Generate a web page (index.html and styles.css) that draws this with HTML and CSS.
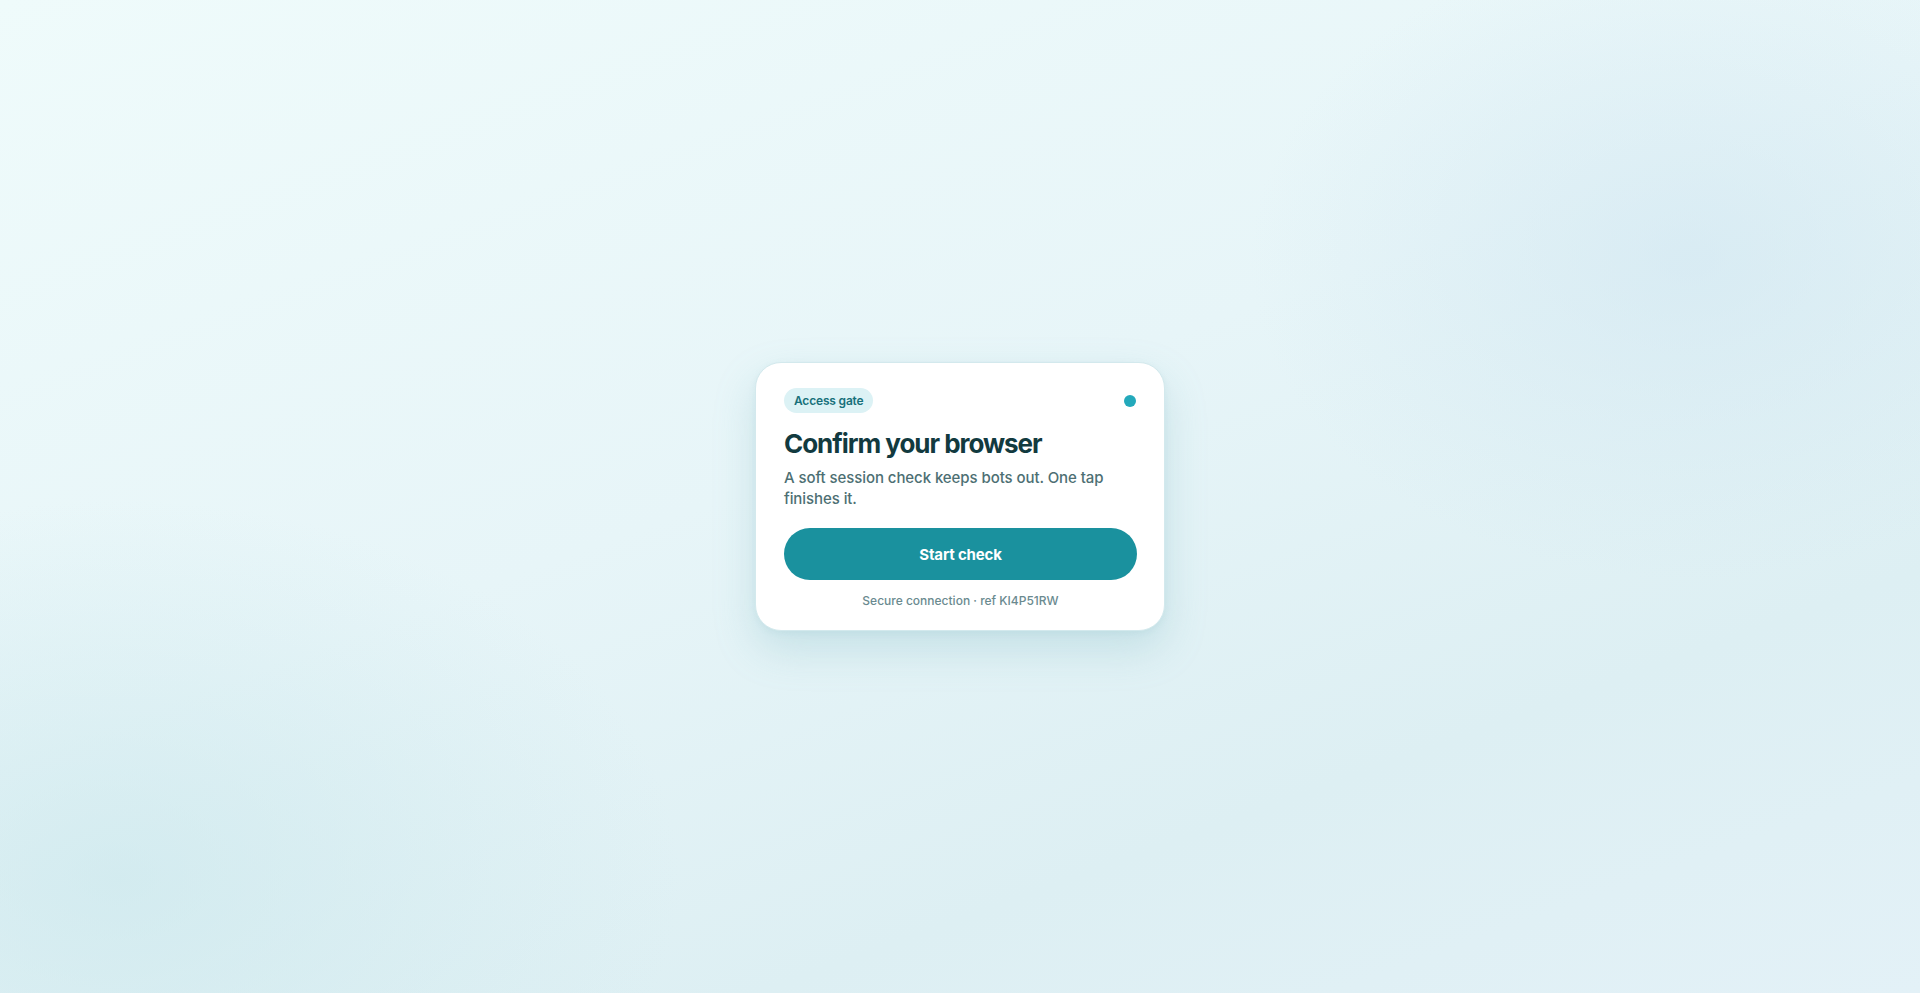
FILE: index.html
```html
<!DOCTYPE html>
<html lang="en">
<head>
<meta charset="utf-8">
<title>Confirm your browser</title>
<link rel="stylesheet" href="styles.css">
</head>
<body>
<main class="stage">
  <section class="card">
    <div class="card-head">
      <span class="badge">Access gate</span>
      <span class="dot"></span>
    </div>
    <h1 class="title">Confirm your browser</h1>
    <p class="lead">A soft session check keeps bots out. One tap finishes it.</p>
    <button class="cta" type="button">Start check</button>
    <p class="foot">Secure connection · ref KI4P51RW</p>
  </section>
</main>
</body>
</html>
```
FILE: styles.css
```css
* { box-sizing: border-box; }
html, body { margin: 0; height: 100%; }
body {
  font-family: Inter, "Noto Sans", "DejaVu Sans", sans-serif;
  background:
    radial-gradient(ellipse 440px 320px at 1690px 260px, rgba(208,230,241,0.6), rgba(208,230,241,0) 100%),
    radial-gradient(ellipse 560px 380px at 120px 880px, rgba(200,230,235,0.6), rgba(200,230,235,0) 100%),
    linear-gradient(160deg, #effbfb 0%, #e7f5f8 45%, #ddeff3 75%, #e3f1f7 100%);
  overflow: hidden;
}
.stage {
  height: 100%;
  display: flex;
  align-items: center;
  justify-content: center;
}
.card {
  width: 410px;
  background: #ffffff;
  border: 1px solid #d3e9ed;
  border-radius: 26px;
  padding: 25px 27px 21px 28px;
  box-shadow: 0 18px 40px rgba(120, 178, 190, 0.28), 0 2px 6px rgba(120, 178, 190, 0.12);
}
.card-head {
  display: flex;
  align-items: center;
  justify-content: space-between;
}
.badge {
  display: inline-flex;
  align-items: center;
  height: 25px;
  padding: 0 10px;
  border-radius: 13px;
  background: #dcf2f5;
  color: #17707a;
  font-size: 12px;
  font-weight: 600;
  letter-spacing: -0.015em;
}
.dot {
  width: 12px;
  height: 12px;
  border-radius: 50%;
  background: #23a9bb;
  margin-right: 1px;
}
.title {
  margin: 15px 0 0;
  font-size: 26px;
  line-height: 31px;
  font-weight: 700;
  letter-spacing: -0.04em;
  color: #123a3f;
}
.lead {
  margin: 8px 0 0;
  font-size: 15px;
  line-height: 21px;
  color: #4d6f73;
  font-weight: 500;
  letter-spacing: -0.005em;
}
.cta {
  display: block;
  width: 100%;
  height: 52px;
  margin-top: 19px;
  border: 0;
  border-radius: 26px;
  background: #1a919e;
  color: #ffffff;
  font-family: inherit;
  font-size: 15px;
  font-weight: 700;
  letter-spacing: -0.01em;
  cursor: pointer;
}
.foot {
  margin: 13px 0 0;
  text-align: center;
  font-size: 12px;
  line-height: 16px;
  color: #6a8a8f;
  font-weight: 500;
}
```
